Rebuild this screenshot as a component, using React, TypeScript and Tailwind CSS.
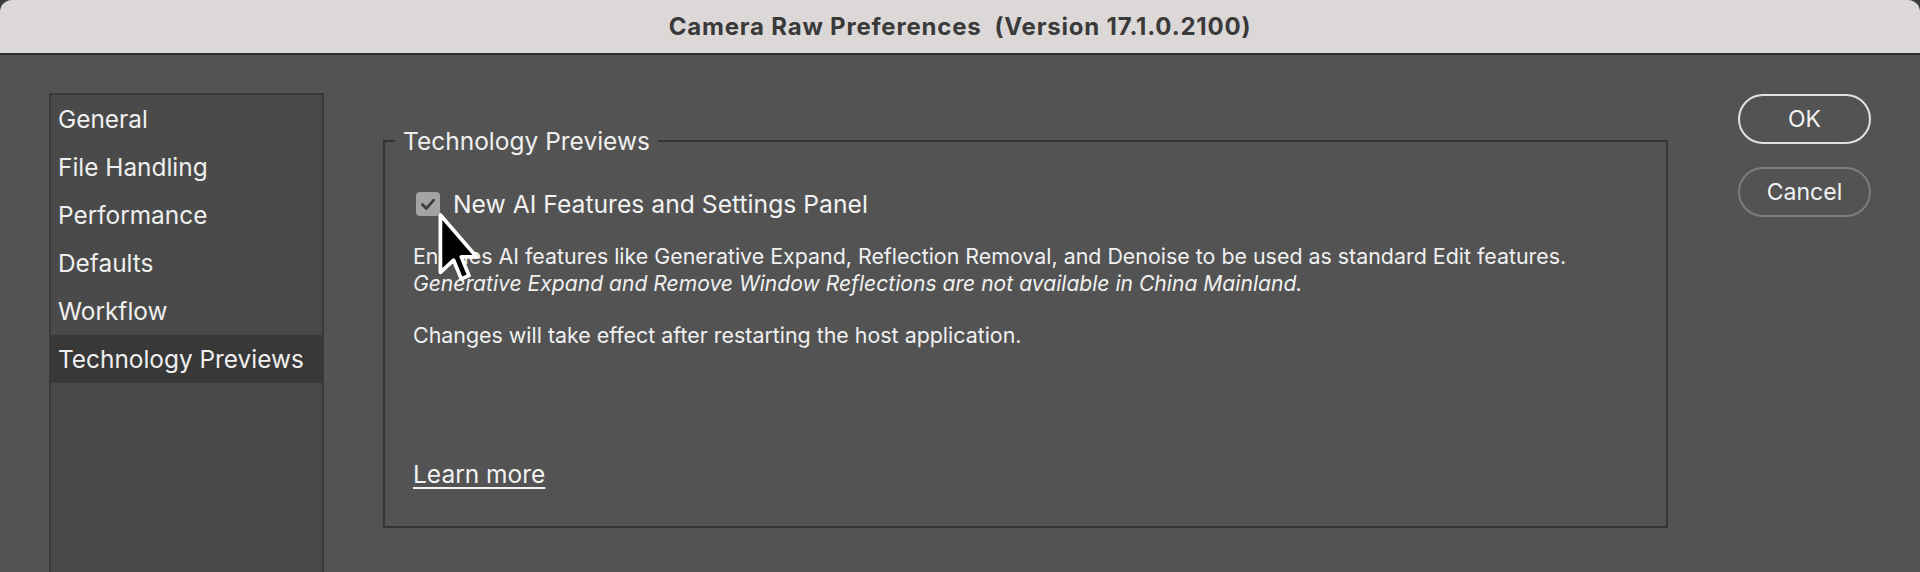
import { useState } from "react"

const sections = [
  "General",
  "File Handling",
  "Performance",
  "Defaults",
  "Workflow",
  "Technology Previews",
]

const font = { fontFamily: "Inter, 'Noto Sans', sans-serif" }

function Pointer() {
  // macOS arrow pointer sitting over the checkbox
  return (
    <svg
      width="44"
      height="78"
      viewBox="0 0 20 33"
      className="absolute left-[20px] top-[16px] pointer-events-none"
      aria-hidden
    >
      <polygon
        points="2,2 2,28 8,22.5 11.5,31 15,29.5 11.5,21 18.5,21"
        fill="#000"
        stroke="#fff"
        strokeWidth="1.7"
        strokeLinejoin="round"
      />
    </svg>
  )
}

function CheckBox({ checked }: { checked: boolean }) {
  return (
    <span className="relative flex h-[24px] w-[24px] shrink-0 items-center justify-center rounded-[4px] bg-[#a3a3a3]">
      {checked && (
        <svg width="18" height="18" viewBox="0 0 16 16" aria-hidden>
          <path
            d="M3 8.5 L6.5 12 L13 4.5"
            fill="none"
            stroke="#3d3d3d"
            strokeWidth="2.4"
            strokeLinecap="round"
            strokeLinejoin="round"
          />
        </svg>
      )}
      <Pointer />
    </span>
  )
}

export default function App() {
  const [active, setActive] = useState("Technology Previews")
  const [aiPanel, setAiPanel] = useState(true)

  return (
    <div className="h-[572px] w-[1920px] overflow-hidden bg-[#3c3c3c]" style={font}>
      <div className="flex h-full flex-col overflow-hidden rounded-t-[12px] bg-[#535353]">
        {/* title bar */}
        <div className="flex h-[55px] shrink-0 items-center justify-center border-b-2 border-[#2f2f2f] bg-[#dcd8d8]">
          <h1 className="text-[24px] font-bold tracking-[0.8px] text-[#3a3a3a] whitespace-pre">
            Camera Raw Preferences  (Version 17.1.0.2100)
          </h1>
        </div>

        <div className="flex flex-1 items-start pl-[49px] pt-[38px]">
          {/* section list */}
          <ul className="h-[500px] w-[275px] shrink-0 border-2 border-[#393939] bg-[#4a4a4a]">
            {sections.map((s) => (
              <li
                key={s}
                onClick={() => setActive(s)}
                className={
                  "flex h-[48px] cursor-default items-center pl-[7px] text-[24.4px] text-[#efefef] " +
                  (active === s ? "bg-[#383838]" : "")
                }
              >
                {s}
              </li>
            ))}
          </ul>

          {/* group box */}
          <fieldset className="ml-[59px] mt-[34px] h-[401px] w-[1285px] shrink-0 border-2 border-[#343434]">
            <legend className="ml-[10px] px-[8px] text-[24.5px] leading-[28px] text-[#efefef]">
              Technology Previews
            </legend>

            <div className="pl-[31px]">
              <label
                className="mt-[34px] flex items-center gap-[13px] text-[24.7px] leading-[30px] text-[#f2f2f2]"
                onClick={() => setAiPanel(!aiPanel)}
              >
                <CheckBox checked={aiPanel} />
                New AI Features and Settings Panel
              </label>

              <div className="-ml-[3px] mt-[24px] text-[21.4px] leading-[27px] text-[#f0f0f0]">
                <p>
                  Enables AI features like Generative Expand, Reflection Removal, and Denoise to be
                  used as standard Edit features.
                </p>
                <p className="text-[21.1px] italic">
                  Generative Expand and Remove Window Reflections are not available in China Mainland.
                </p>
                <p className="mt-[25px]">
                  Changes will take effect after restarting the host application.
                </p>
              </div>

              <a
                href="#"
                className="-ml-[3px] mt-[107px] inline-block text-[24.5px] text-[#f2f2f2] underline underline-offset-[4px] decoration-[2px]"
              >
                Learn more
              </a>
            </div>
          </fieldset>

          {/* buttons */}
          <div className="ml-[70px] mt-[1px] flex flex-col gap-[23px]">
            <button className="h-[50px] w-[133px] rounded-full border-2 border-[#e2e2e2] text-[23px] text-[#f2f2f2]">
              OK
            </button>
            <button className="h-[50px] w-[133px] rounded-full border-2 border-[#7c7c7c] text-[23px] text-[#f2f2f2]">
              Cancel
            </button>
          </div>
        </div>
      </div>
    </div>
  )
}
